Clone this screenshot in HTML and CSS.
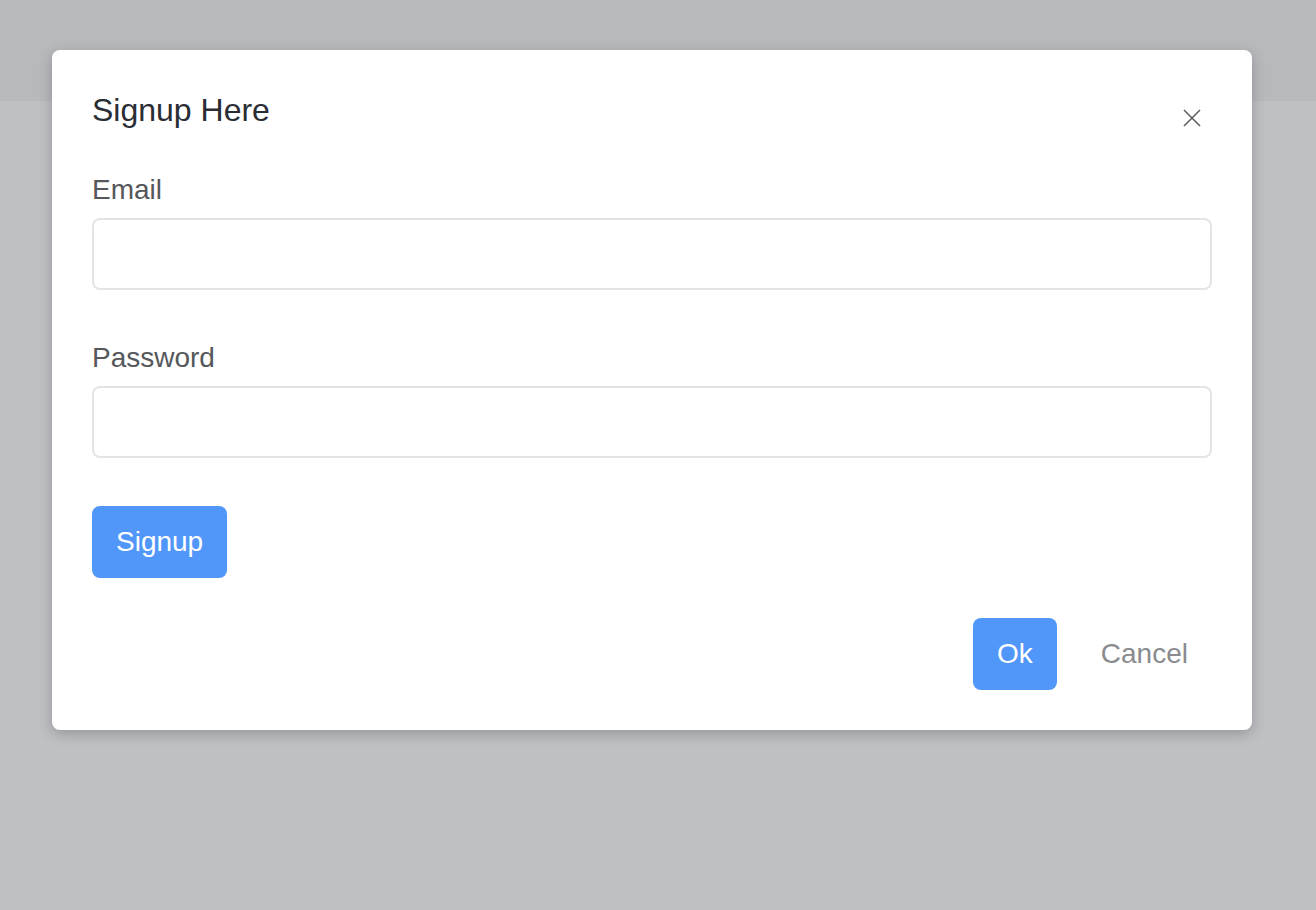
FILE: index.html
```html
<!DOCTYPE html>
<html lang="en">
<head>
<meta charset="utf-8">
<title>Signup</title>
<link rel="stylesheet" href="styles.css">
</head>
<body>
<div class="page">
  <div class="topbar"></div>
  <div class="modal">
    <div class="modal-header">
      <h2 class="modal-title">Signup Here</h2>
      <button class="close" type="button" aria-label="Close">
        <svg width="18" height="18" viewBox="0 0 18 18"><path d="M1 1 L17 17 M17 1 L1 17" stroke="#5f5f62" stroke-width="1.6" fill="none"/></svg>
      </button>
    </div>
    <form class="form">
      <div class="field field-first">
        <label class="label">Email</label>
        <input class="input" type="text">
      </div>
      <div class="field field-next">
        <label class="label">Password</label>
        <input class="input" type="password">
      </div>
      <button class="btn btn-primary btn-signup" type="button">Signup</button>
    </form>
    <div class="modal-footer">
      <button class="btn btn-primary" type="button">Ok</button>
      <button class="btn btn-text" type="button">Cancel</button>
    </div>
  </div>
</div>
</body>
</html>
```
FILE: styles.css
```css
html, body {
  margin: 0;
  padding: 0;
  height: 100%;
}
body {
  background: #bfc0c3;
  font-family: "Liberation Sans", Arial, Helvetica, sans-serif;
  overflow: hidden;
}
.page {
  position: relative;
  height: 910px;
}
.topbar {
  height: 101px;
  background: #b8b9bd;
}
.modal {
  position: absolute;
  left: 52px;
  top: 50px;
  width: 1200px;
  box-sizing: border-box;
  padding: 40px;
  background: #fff;
  border-radius: 8px;
  box-shadow: 0 4px 14px rgba(0, 0, 0, 0.22);
}
.modal-header {
  display: flex;
  justify-content: space-between;
  align-items: flex-start;
  height: 40px;
}
.modal-title {
  margin: 0;
  font-size: 32px;
  line-height: 40px;
  font-weight: 400;
  color: #2a2d33;
}
.close {
  width: 40px;
  height: 40px;
  margin-top: 8px;
  padding: 0;
  border: 0;
  background: transparent;
  display: flex;
  align-items: center;
  justify-content: center;
  cursor: pointer;
}
.form {
  display: flex;
  flex-direction: column;
  align-items: flex-start;
}
.field {
  display: flex;
  flex-direction: column;
  width: 100%;
}
.field-first {
  margin-top: 40px;
}
.field-next {
  margin-top: 48px;
}
.label {
  font-size: 28px;
  line-height: 40px;
  color: #55575b;
  margin-bottom: 8px;
}
.input {
  box-sizing: border-box;
  width: 100%;
  height: 72px;
  border: 2px solid #e4e4e8;
  border-radius: 8px;
  padding: 0 20px;
  font-size: 28px;
  font-family: inherit;
  outline: none;
  background: #fff;
}
.btn {
  box-sizing: border-box;
  height: 72px;
  padding: 0 24px;
  border: 0;
  border-radius: 8px;
  font-family: inherit;
  font-size: 28px;
  line-height: 40px;
  cursor: pointer;
}
.btn-primary {
  background: #5196f9;
  color: #fff;
}
.btn-text {
  background: transparent;
  color: #8a8b8f;
}
.btn-signup {
  margin-top: 48px;
}
.modal-footer {
  margin-top: 40px;
  display: flex;
  justify-content: flex-end;
  gap: 20px;
}
```
